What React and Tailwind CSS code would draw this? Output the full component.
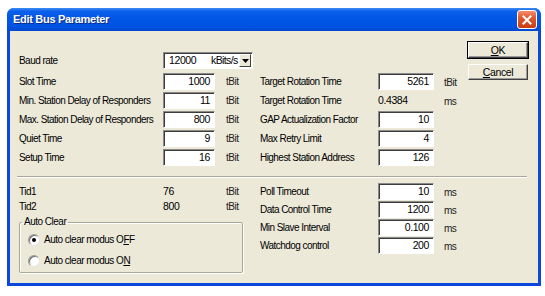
const font = "font-['Liberation_Sans',Arial,sans-serif]";

const Field = ({ value, w = 'w-[52px]' }) => (
  <div
    className={`${w} h-[17px] bg-white border-t border-l border-[#8A8A8A] border-r border-b border-r-white border-b-white shadow-[inset_1px_1px_0_#3C3C3C] text-right pr-[4px] leading-[15px] text-[10.5px] tracking-[-0.4px]`}
  >
    {value}
  </div>
);

const Label = ({ children }) => (
  <div className="h-[17px] leading-[17px] text-[10px] tracking-[-0.55px] whitespace-nowrap">{children}</div>
);

const Unit = ({ children }) => (
  <div className="h-[17px] leading-[17px] text-[10px] tracking-[-0.5px] text-[#222]">{children}</div>
);

const Radio = ({ checked, children }) => (
  <div className="flex items-center gap-[4px] h-[12px]">
    <div className="w-[12px] h-[12px] rounded-full border border-[#9A9A9A] border-b-[#E4E4E4] border-r-[#E4E4E4] bg-white flex items-center justify-center shadow-[inset_1px_1px_0_#6E6E6E]">
      {checked && <div className="w-[4px] h-[4px] rounded-full bg-black" />}
    </div>
    <span className="text-[10px] tracking-[-0.5px] leading-[12px]">{children}</span>
  </div>
);

const Button = ({ children, primary }) => (
  <button
    className={`w-[62px] h-[18px] bg-[#ECE9D8] text-[10.5px] tracking-[-0.4px] leading-[14px] ${
      primary ? 'border border-black' : 'border border-transparent'
    }`}
  >
    <div className="h-full border-t border-l border-white border-r border-b border-r-[#404040] border-b-[#404040] shadow-[inset_-1px_-1px_0_#9A9A9A]">
      {children}
    </div>
  </button>
);

const topRows = [
  ['Slot Time', '1000', 'Target Rotation Time', '5261', 'tBit'],
  ['Min. Station Delay of Responders', '11', 'Target Rotation Time', null, 'ms'],
  ['Max. Station Delay of Responders', '800', 'GAP Actualization Factor', '10', ''],
  ['Quiet Time', '9', 'Max Retry Limit', '4', ''],
  ['Setup Time', '16', 'Highest Station Address', '126', ''],
];

const bottomRows = [
  ['Poll Timeout', '10'],
  ['Data Control Time', '1200'],
  ['Min Slave Interval', '0.100'],
  ['Watchdog control', '200'],
];

export default function App() {
  return (
    <div className={`w-[545px] h-[296px] bg-white pt-[8px] pl-[7px] text-black ${font}`}>
      <div className="w-[534px] h-[278px] flex flex-col rounded-t-[7px] overflow-hidden bg-[#0A47DA]">
        {/* Title bar */}
        <div className="h-[23px] shrink-0 flex items-center justify-between pl-[6px] pr-[4px] bg-[linear-gradient(to_bottom,#3E8CF4_0%,#0B60EA_14%,#0056E6_45%,#0053E2_80%,#0048CF_100%)]">
          <span className="text-white font-bold text-[11px] tracking-[-0.3px] [text-shadow:1px_1px_0_#0A2A8A]">
            Edit Bus Parameter
          </span>
          <div className="w-[20px] h-[19px] rounded-[3px] border border-white bg-[linear-gradient(to_bottom,#F09070,#E2582E_40%,#C93D14)] flex items-center justify-center">
            <svg width="10" height="10" viewBox="0 0 10 10">
              <path d="M1.5 1.5 L8.5 8.5 M8.5 1.5 L1.5 8.5" stroke="white" strokeWidth="2" strokeLinecap="square" />
            </svg>
          </div>
        </div>

        {/* Body */}
        <div className="flex-1 mx-[3px] mb-[3px] bg-[#ECE9D8] flex flex-col">
          <div className="flex">
            <div className="pl-[9px] mt-[21px] grid grid-cols-[144px_52px_45px_118px_56px_auto] grid-rows-[21px] auto-rows-[19px]">
              <Label>Baud rate</Label>
              <div className="col-span-3">
                <div className="w-[90px] h-[17px] bg-white border-t border-l border-[#8A8A8A] border-r border-b border-r-white border-b-white shadow-[inset_1px_1px_0_#3C3C3C] flex items-center">
                  <span className="pl-[5px] w-[47px] text-[10.5px] tracking-[-0.4px]">12000</span>
                  <span className="flex-1 text-[10.5px] tracking-[-0.6px]">kBits/s</span>
                  <div className="w-[12px] h-[13px] mr-[1px] bg-[#ECE9D8] border border-white border-r-[#404040] border-b-[#404040] flex items-center justify-center">
                    <svg width="7" height="4" viewBox="0 0 7 4">
                      <path d="M0 0 H7 L3.5 4 Z" fill="black" />
                    </svg>
                  </div>
                </div>
              </div>
              <div className="col-span-2" />
              {topRows.map(([l, v, rl, rv, ru]) => (
                <div key={l} className="contents">
                  <Label>{l}</Label>
                  <Field value={v} />
                  <div className="pl-[11px]">
                    <Unit>tBit</Unit>
                  </div>
                  <Label>{rl}</Label>
                  {rv === null ? (
                    <div className="h-[17px] leading-[17px] text-[10.5px] tracking-[-0.4px]">0.4384</div>
                  ) : (
                    <Field value={rv} w="w-[56px]" />
                  )}
                  <div className="pl-[10px] pt-[1px]">
                    <Unit>{ru}</Unit>
                  </div>
                </div>
              ))}
            </div>
            <div className="ml-auto mr-[9px] pt-[10px] flex flex-col gap-[4px]">
              <Button primary>
                <span className="underline">O</span>K
              </Button>
              <Button>
                <span className="underline">C</span>ancel
              </Button>
            </div>
          </div>

          {/* Separator */}
          <div className="mt-[8px] ml-[7px] mr-[11px] border-t border-[#ACA899] border-b border-b-white" />

          <div className="flex pl-[9px]">
            <div className="w-[241px] pt-[6px]">
              <div className="grid grid-cols-[144px_63px_auto] auto-rows-[15px] text-[10px] tracking-[-0.5px] leading-[15px]">
                <div>Tid1</div>
                <div className="text-[10.5px] tracking-[-0.4px]">76</div>
                <div className="text-[#222]">tBit</div>
                <div>Tid2</div>
                <div className="text-[10.5px] tracking-[-0.4px]">800</div>
                <div className="text-[#222]">tBit</div>
              </div>
              <fieldset className="mt-[2px] w-[224px] h-[57px] border border-[#A9A796] rounded-[2px] shadow-[inset_1px_1px_0_white,1px_1px_0_white] pl-[8px] pt-[6px] flex flex-col gap-[9px]">
                <legend className="ml-[-6px] px-[2px] text-[10px] tracking-[-0.5px] leading-[12px]">Auto Clear</legend>
                <Radio checked>
                  Auto clear modus O<span className="underline">F</span>F
                </Radio>
                <Radio>
                  Auto clear modus O<span className="underline">N</span>
                </Radio>
              </fieldset>
            </div>
            <div className="mt-[5px] grid grid-cols-[118px_56px_auto] auto-rows-[18px]">
              {bottomRows.map(([l, v]) => (
                <div key={l} className="contents">
                  <Label>{l}</Label>
                  <Field value={v} w="w-[56px]" />
                  <div className="pl-[10px] pt-[1px]">
                    <Unit>ms</Unit>
                  </div>
                </div>
              ))}
            </div>
          </div>
        </div>
      </div>
    </div>
  );
}
